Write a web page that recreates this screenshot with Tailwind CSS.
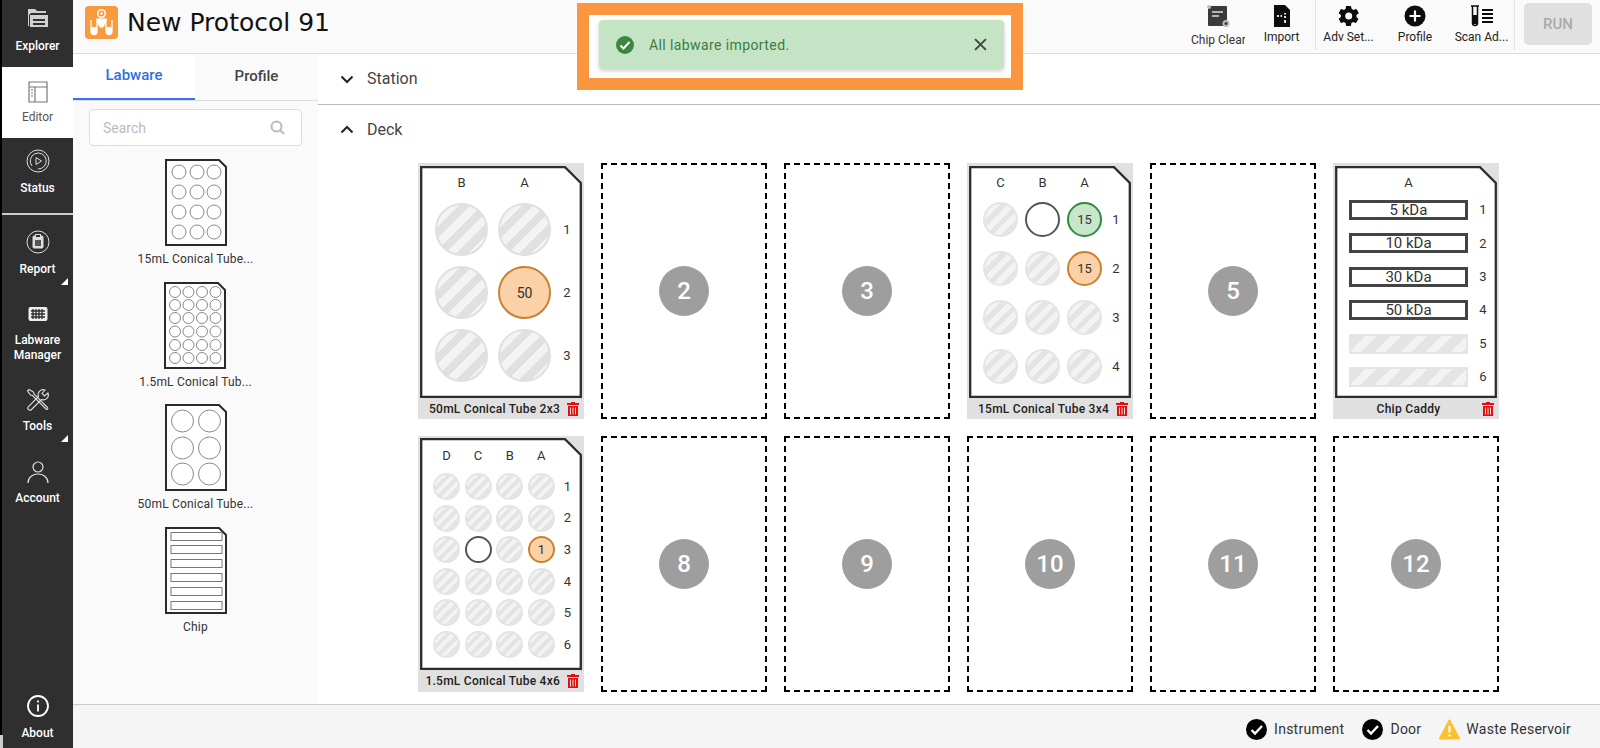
<!DOCTYPE html>
<html lang="en">

<head>
  <meta charset="UTF-8" />
  <title>New Protocol 91</title>
  <script src="https://cdn.jsdelivr.net/npm/@tailwindcss/browser@4"></script>
</head>

<body class="bg-white font-['Roboto',sans-serif] text-[#222] overflow-hidden">
  <!-- shared svg symbols -->
  <svg class="hidden">
    <symbol id="trash" viewBox="0 0 12 14">
      <path fill="#e01010" d="M4 0h4v1h4v2H0V1h4zM1 4h10v10H1zM3 5.500v7h1v-7zM5.500 5.500v7h1v-7zM8 5.500v7h1v-7z" fill-rule="evenodd" />
    </symbol>
    <symbol id="frame" viewBox="0 0 162 232">
      <path d="M1.200 1.200H145L160.800 17V230.800H1.200Z" fill="#fff" stroke="#2c2c2c" stroke-width="2.300" />
    </symbol>
    <symbol id="thumb" viewBox="0 0 62 87">
      <path d="M1 1H54L61 8V86H1Z" fill="#fff" stroke="#2a2a2a" stroke-width="2" />
    </symbol>
    <symbol id="ok" viewBox="0 0 21 21">
      <circle cx="10.500" cy="10.500" r="10.500" fill="#000" />
      <path d="M5.500 11l3.500 3.500 7-7.500" fill="none" stroke="#fff" stroke-width="2.400" />
    </symbol>
  </svg>

  <div class="flex h-[748px] w-[1600px]">
    <!-- Sidebar -->
    <aside class="relative flex w-[73px] shrink-0 flex-col border-l-2 border-black bg-[#2f2f2f] text-xs font-medium text-white">
      <a class="flex h-[67px] flex-col items-center gap-[8px] pt-[6px]">
        <svg class="h-6 w-6" viewBox="0 0 24 24" fill="#d0d0d0">
          <path d="M2 3h7l2 2h9v2H5L3 9v11H2z" />
          <path d="M4 9h18v12H4zM7 13v2h12v-2zM7 17v2h12v-2z" fill-rule="evenodd" />
        </svg>
        <span class="leading-4">Explorer</span>
      </a>
      <a class="flex h-[71px] flex-col items-center gap-[6px] bg-white pt-3 font-normal text-[#555]">
        <svg class="h-6 w-6" viewBox="0 0 24 24" fill="none" stroke="#777" stroke-width="1.200">
          <path d="M3 3h18v20H3zM3 8h18M9 8v15" />
          <path d="M5 11h2M5 14h2M5 17h2" />
        </svg>
        <span class="leading-4">Editor</span>
      </a>
      <a class="flex h-[75px] flex-col items-center gap-[7px] pt-[11px]">
        <svg class="h-6 w-6" viewBox="0 0 24 24" fill="none" stroke="#ddd" stroke-width="1">
          <circle cx="12" cy="12" r="11" />
          <path d="M6 17a8 8 0 1 1 6 3" />
          <path d="M10 8.500l5.500 3.500-5.500 3.500z" />
        </svg>
        <span class="leading-4">Status</span>
      </a>
      <div class="h-[2px] bg-[#ccc]"></div>
      <a class="relative flex h-[75px] flex-col items-center gap-[7px] pt-[15px]">
        <svg class="h-6 w-6" viewBox="0 0 24 24" fill="none" stroke="#ddd" stroke-width="1">
          <circle cx="12" cy="12" r="11" />
          <rect x="7" y="6" width="10" height="12" rx="1" fill="#ddd" />
          <rect x="9.500" y="4.500" width="5" height="3" fill="#2f2f2f" />
          <rect x="9" y="10" width="6" height="6" fill="#555" stroke="none" />
        </svg>
        <span class="leading-4">Report</span>
        <svg class="absolute right-[5px] top-[63px] h-[7px] w-[7px]" viewBox="0 0 7 7"><path d="M7 0v7H0z" fill="#fff" /></svg>
      </a>
      <a class="flex h-[85px] flex-col items-center gap-[7px] pt-3">
        <svg class="h-6 w-6" viewBox="0 0 24 24">
          <rect x="2.500" y="5" width="19" height="14" rx="2" fill="#eee" />
          <path d="M5 9h14M5 12h14M5 15h14M7 7v10M10 7v10M13 7v10M16 7v10" stroke="#2f2f2f" stroke-width="1.300" />
        </svg>
        <span class="text-center leading-[15px]">Labware<br />Manager</span>
      </a>
      <a class="relative flex h-[80px] flex-col items-center gap-[6px] pt-[13px]">
        <svg class="h-6 w-6" viewBox="0 0 24 24" fill="none" stroke="#ddd" stroke-width="1.100">
          <path d="M3 1.500L1.500 3l3 4 2 .5L20 21c1 1 2.500-.5 1.500-1.500L8 6l-.5-2z" />
          <path d="M22 5l-3.500 3-2.500-2.500L19 2a5 5 0 0 0-6.500 6.500L2.500 18.500c-2 2.500 1 5 3 3L15.500 11.500A5 5 0 0 0 22 5z" />
        </svg>
        <span class="leading-4">Tools</span>
        <svg class="absolute right-[5px] top-[60px] h-[7px] w-[7px]" viewBox="0 0 7 7"><path d="M7 0v7H0z" fill="#fff" /></svg>
      </a>
      <a class="flex flex-col items-center gap-[6px] pt-[5px]">
        <svg class="h-6 w-6" viewBox="0 0 24 24" fill="none" stroke="#ddd" stroke-width="1.200">
          <circle cx="12" cy="7" r="5" />
          <path d="M2 23c0-12 20-12 20 0" />
        </svg>
        <span class="leading-4">Account</span>
      </a>
      <a class="mt-auto flex flex-col items-center gap-[7px] pb-[7px]">
        <svg class="h-6 w-6" viewBox="0 0 24 24" fill="none" stroke="#fff" stroke-width="1.800">
          <circle cx="12" cy="12" r="10" />
          <path d="M12 10.500v7M12 6.500v2" />
        </svg>
        <span class="leading-4">About</span>
      </a>
      <div class="absolute bottom-0 left-[-2px] h-[13px] w-[3px] bg-[#ccc]"></div>
    </aside>

    <div class="flex min-w-0 flex-1 flex-col">
      <!-- Top bar -->
      <header class="flex h-[54px] shrink-0 items-start border-b border-[#ddd] bg-[#fafafa]">
        <svg class="ml-3 mt-[6px] h-[33px] w-[33px]" viewBox="0 0 33 33">
          <rect width="33" height="33" rx="4" fill="#f99a3c" />
          <circle cx="16.500" cy="7.500" r="3.800" fill="none" stroke="#fff" stroke-width="1.600" />
          <circle cx="16.500" cy="7.500" r="1.200" fill="#fff" />
          <path d="M11 12.500h11l-3 8-2.500 1.500-2.500-1.500z" fill="#fff" />
          <path d="M6 14v11.500a3 3 0 0 0 6 0V14M21 14v11.500a3 3 0 0 0 6 0V14" fill="none" stroke="#fff" stroke-width="1.300" />
          <path d="M6 21h6v4.500a3 3 0 0 1-6 0zM21 21h6v4.500a3 3 0 0 1-6 0z" fill="#fff" />
        </svg>
        <h1 class="ml-[9px] mt-[6px] font-['DejaVu_Sans',sans-serif] text-[25px] leading-[33px] text-[#111]">New Protocol 91</h1>

        <div class="ml-auto flex h-[50px] text-xs text-[#222]">
          <div class="flex w-[60px] flex-col items-center gap-[5px] pt-[5px]">
            <svg class="h-[22px] w-[24px]" viewBox="0 0 24 22">
              <rect x="2" y="1" width="19" height="20" rx="1" fill="#3a3a3a" />
              <path d="M6 7h11M6 11h7" stroke="#ddd" stroke-width="1.500" />
              <circle cx="3" cy="2" r="2" fill="#bbb" />
              <circle cx="20" cy="18.500" r="3.500" fill="#bbb" />
              <circle cx="20" cy="18.500" r="1.500" fill="#3a3a3a" />
            </svg>
            <span class="w-[54px] overflow-hidden whitespace-nowrap leading-4 text-[#333]">Chip Clear</span>
          </div>
          <div class="flex w-[67px] flex-col items-center gap-[2px] pt-[5px]">
            <svg class="h-[22px] w-[18px]" viewBox="0 0 18 22">
              <path d="M1 0h11l5 5v17H1z" fill="#0c0c0c" />
              <path d="M4 10h2v2H4zM7.500 10h1.500v2H7.500zM11 8h2v1.500h-2zM11 11h2v2h-2zM11 15h2v3h-2z" fill="#ddd" />
            </svg>
            <span class="leading-4">Import</span>
          </div>
          <div class="flex w-[66px] flex-col items-center gap-[1px] border-l border-[#e4e4e4] pt-[4px]">
            <svg class="h-6 w-6" viewBox="0 0 24 24" fill="#0c0c0c">
              <path fill-rule="evenodd" d="M19.400 13c.1-.3.100-.7.100-1s0-.7-.1-1l2.100-1.600c.2-.2.200-.4.100-.6l-2-3.500c-.1-.2-.4-.3-.6-.2l-2.500 1c-.5-.4-1.100-.7-1.700-1L14 2.400c0-.2-.2-.4-.5-.4h-4c-.2 0-.5.200-.5.400l-.4 2.700c-.6.300-1.200.6-1.700 1l-2.500-1c-.2-.1-.5 0-.6.200l-2 3.500c-.1.200-.1.400.1.600L4 11c-.1.300-.1.700-.1 1s0 .7.100 1l-2.100 1.600c-.2.200-.2.400-.1.600l2 3.500c.1.200.4.300.6.200l2.500-1c.5.400 1.100.7 1.700 1l.4 2.700c0 .2.300.4.500.4h4c.3 0 .5-.2.500-.4l.4-2.700c.6-.3 1.200-.6 1.700-1l2.500 1c.2.100.5 0 .6-.2l2-3.500c.1-.2.100-.4-.1-.6zM11.700 15.500a3.500 3.500 0 1 1 0-7 3.500 3.500 0 0 1 0 7z" />
            </svg>
            <span class="leading-4">Adv Set...</span>
          </div>
          <div class="flex w-[68px] flex-col items-center gap-[2px] pt-[5px]">
            <svg class="h-[22px] w-[22px]" viewBox="0 0 22 22">
              <circle cx="11" cy="11" r="10.500" fill="#0c0c0c" />
              <path d="M11 5.500v11M5.500 11h11" stroke="#fff" stroke-width="2.200" />
            </svg>
            <span class="leading-4">Profile</span>
          </div>
          <div class="flex w-[66px] flex-col items-center gap-[2px] border-r border-[#e4e4e4] pt-[5px]">
            <svg class="h-[22px] w-[24px]" viewBox="0 0 24 22">
              <path d="M1 1h8M2.500 1v17a2 2 0 0 0 5 0V1" fill="none" stroke="#0c0c0c" stroke-width="1.500" />
              <path d="M3 10h4v9H3z" fill="#0c0c0c" />
              <path d="M12 5h11M12 9h11M12 13h11M12 17h11" stroke="#0c0c0c" stroke-width="2" />
            </svg>
            <span class="whitespace-nowrap leading-4">Scan Ad...</span>
          </div>
        </div>
        <button class="ml-[9px] mr-2 mt-[3px] h-[42px] w-[68px] rounded-[5px] bg-[#e0e0e0] text-[15px] font-medium text-[#aaa]">RUN</button>
      </header>

      <div class="flex min-h-0 flex-1">
        <!-- Left panel -->
        <section class="w-[245px] shrink-0 bg-[#fafafa]">
          <div class="flex h-[47px] border-b border-[#ddd]">
            <button class="h-[46px] w-[122px] border-b-2 border-[#3b73e6] bg-white pb-[2px] text-[15px] font-medium text-[#2f6fe4]">Labware</button>
            <button class="h-[45px] w-[123px] text-[15px] font-medium text-[#444]">Profile</button>
          </div>
          <div class="mx-4 mt-2 flex h-[37px] items-center justify-between rounded-sm border border-[#ddd] bg-white pl-[13px] pr-4 text-sm text-[#bbb]">
            <span>Search</span>
            <svg class="h-[15px] w-[15px]" viewBox="0 0 15 15" fill="none" stroke="#bbb" stroke-width="2">
              <circle cx="6.500" cy="6.500" r="5" />
              <path d="M10 10l4 4" />
            </svg>
          </div>
          <div class="mt-[13px] flex flex-col items-center text-xs text-[#333]">
            <div class="flex h-[122.500px] flex-col items-center gap-[3px]">
              <svg class="h-[87px] w-[62px]" viewBox="0 0 62 87" fill="none" stroke="#888">
                <use href="#thumb" width="62" height="87" />
                <circle cx="14" cy="13" r="7" /><circle cx="32" cy="13" r="7" /><circle cx="49" cy="13" r="7" />
                <circle cx="14" cy="33" r="7" /><circle cx="32" cy="33" r="7" /><circle cx="49" cy="33" r="7" />
                <circle cx="14" cy="53" r="7" /><circle cx="32" cy="53" r="7" /><circle cx="49" cy="53" r="7" />
                <circle cx="14" cy="73" r="7" /><circle cx="32" cy="73" r="7" /><circle cx="49" cy="73" r="7" />
              </svg>
              <span class="leading-5 tracking-[.2px]">15mL Conical Tube...</span>
            </div>
            <div class="flex h-[122.500px] flex-col items-center gap-[3px]">
              <svg class="h-[87px] w-[62px]" viewBox="0 0 62 87" fill="none" stroke="#888">
                <use href="#thumb" width="62" height="87" />
                <circle cx="11" cy="10" r="5.500" /><circle cx="24.500" cy="10" r="5.500" /><circle cx="38" cy="10" r="5.500" /><circle cx="51.500" cy="10" r="5.500" />
                <circle cx="11" cy="23" r="5.500" /><circle cx="24.500" cy="23" r="5.500" /><circle cx="38" cy="23" r="5.500" /><circle cx="51.500" cy="23" r="5.500" />
                <circle cx="11" cy="36" r="5.500" /><circle cx="24.500" cy="36" r="5.500" /><circle cx="38" cy="36" r="5.500" /><circle cx="51.500" cy="36" r="5.500" />
                <circle cx="11" cy="49.500" r="5.500" /><circle cx="24.500" cy="49.500" r="5.500" /><circle cx="38" cy="49.500" r="5.500" /><circle cx="51.500" cy="49.500" r="5.500" />
                <circle cx="11" cy="63" r="5.500" /><circle cx="24.500" cy="63" r="5.500" /><circle cx="38" cy="63" r="5.500" /><circle cx="51.500" cy="63" r="5.500" />
                <circle cx="11" cy="76" r="5.500" /><circle cx="24.500" cy="76" r="5.500" /><circle cx="38" cy="76" r="5.500" /><circle cx="51.500" cy="76" r="5.500" />
              </svg>
              <span class="leading-5 tracking-[.2px]">1.5mL Conical Tub...</span>
            </div>
            <div class="flex h-[122.500px] flex-col items-center gap-[3px]">
              <svg class="h-[87px] w-[62px]" viewBox="0 0 62 87" fill="none" stroke="#888">
                <use href="#thumb" width="62" height="87" />
                <circle cx="17.500" cy="17" r="11" /><circle cx="44.500" cy="17" r="11" />
                <circle cx="17.500" cy="44" r="11" /><circle cx="44.500" cy="44" r="11" />
                <circle cx="17.500" cy="70" r="11" /><circle cx="44.500" cy="70" r="11" />
              </svg>
              <span class="leading-5 tracking-[.2px]">50mL Conical Tube...</span>
            </div>
            <div class="flex h-[122.500px] flex-col items-center gap-[3px]">
              <svg class="h-[87px] w-[62px]" viewBox="0 0 62 87" fill="none" stroke="#777">
                <use href="#thumb" width="62" height="87" />
                <rect x="6" y="5.500" width="51" height="8" /><rect x="6" y="18.500" width="51" height="8" /><rect x="6" y="32.500" width="51" height="8" />
                <rect x="6" y="46.500" width="51" height="8" /><rect x="6" y="60.500" width="51" height="8" /><rect x="6" y="74.500" width="51" height="8" />
              </svg>
              <span class="leading-5 tracking-[.2px]">Chip</span>
            </div>
          </div>
        </section>

        <!-- Main -->
        <main class="flex min-w-0 flex-1 flex-col bg-white">
          <div class="flex h-[51px] shrink-0 items-center gap-[13px] border-b border-[#bbb] pl-[22px] text-base text-[#444]">
            <svg class="h-[14px] w-[14px]" viewBox="0 0 14 14" fill="none" stroke="#222" stroke-width="2"><path d="M1.500 4.500L7 10l5.500-5.500" /></svg>
            <span>Station</span>
          </div>
          <div class="flex h-[50px] shrink-0 items-center gap-[13px] pl-[22px] text-base text-[#444]">
            <svg class="h-[14px] w-[14px]" viewBox="0 0 14 14" fill="none" stroke="#222" stroke-width="2"><path d="M1.500 9.500L7 4l5.500 5.500" /></svg>
            <span>Deck</span>
          </div>

          <div class="ml-[100px] mt-[8px] grid grid-cols-[repeat(6,166px)] grid-rows-[256px_256px] gap-[17px]">
            <!-- 1 -->
            <div class="flex flex-col bg-[#e0e0e0] px-[2px] pt-[3px]">
              <div class="relative h-[232px] w-[162px]">
                <svg class="absolute inset-0 h-full w-full"><use href="#frame" width="162" height="232" /></svg>
                <div class="relative grid grid-cols-[53px_53px_12px] gap-x-[10px] gap-y-[10px] pl-[15px] pt-[7px] text-[13px] text-[#333]">
                  <span class="h-5 text-center leading-5">B</span><span class="h-5 text-center leading-5">A</span><span></span>
                  <i class="h-[53px] rounded-full border-2 border-[#e0e0e0] bg-[repeating-linear-gradient(135deg,#e0e0e0_0_8px,#f3f3f3_8px_16px)]"></i>
                  <i class="h-[53px] rounded-full border-2 border-[#e0e0e0] bg-[repeating-linear-gradient(135deg,#e0e0e0_0_8px,#f3f3f3_8px_16px)]"></i>
                  <span class="self-center text-center">1</span>
                  <i class="h-[53px] rounded-full border-2 border-[#e0e0e0] bg-[repeating-linear-gradient(135deg,#e0e0e0_0_8px,#f3f3f3_8px_16px)]"></i>
                  <span class="flex h-[53px] items-center justify-center rounded-full border-2 border-[#c98232] bg-[#fbd2a7] text-sm">50</span>
                  <span class="self-center text-center">2</span>
                  <i class="h-[53px] rounded-full border-2 border-[#e0e0e0] bg-[repeating-linear-gradient(135deg,#e0e0e0_0_8px,#f3f3f3_8px_16px)]"></i>
                  <i class="h-[53px] rounded-full border-2 border-[#e0e0e0] bg-[repeating-linear-gradient(135deg,#e0e0e0_0_8px,#f3f3f3_8px_16px)]"></i>
                  <span class="self-center text-center">3</span>
                </div>
              </div>
              <div class="flex h-[21px] items-center justify-end gap-[7px] pr-[3px] text-xs font-medium"><span class="tracking-[.25px]">50mL Conical Tube 2x3</span><svg class="h-[14px] w-3"><use href="#trash" width="12" height="14" /></svg></div>
            </div>
            <!-- 2 -->
            <div class="flex items-center justify-center border-2 border-dashed border-black"><span class="flex h-[50px] w-[50px] items-center justify-center rounded-full bg-[#9e9e9e] text-2xl font-medium text-white">2</span></div>
            <!-- 3 -->
            <div class="flex items-center justify-center border-2 border-dashed border-black"><span class="flex h-[50px] w-[50px] items-center justify-center rounded-full bg-[#9e9e9e] text-2xl font-medium text-white">3</span></div>
            <!-- 4 -->
            <div class="flex flex-col bg-[#e0e0e0] px-[2px] pt-[3px]">
              <div class="relative h-[232px] w-[162px]">
                <svg class="absolute inset-0 h-full w-full"><use href="#frame" width="162" height="232" /></svg>
                <div class="relative grid grid-cols-[35px_35px_35px_12px] gap-x-[7px] gap-y-[14px] pl-[14px] pt-[7px] text-[13px] text-[#333]">
                  <span class="mb-[-5px] h-5 text-center leading-5">C</span><span class="mb-[-5px] h-5 text-center leading-5">B</span><span class="mb-[-5px] h-5 text-center leading-5">A</span><span></span>
                  <i class="h-[35px] rounded-full border-2 border-[#e4e4e4] bg-[repeating-linear-gradient(135deg,#e4e4e4_0_5.500px,#f3f3f3_5.500px_11px)]"></i>
                  <i class="h-[35px] rounded-full border-2 border-[#555] bg-white"></i>
                  <span class="flex h-[35px] items-center justify-center rounded-full border-2 border-[#2e8b3e] bg-[#c8e6c9]">15</span>
                  <span class="ml-[2px] self-center text-center">1</span>
                  <i class="h-[35px] rounded-full border-2 border-[#e4e4e4] bg-[repeating-linear-gradient(135deg,#e4e4e4_0_5.500px,#f3f3f3_5.500px_11px)]"></i>
                  <i class="h-[35px] rounded-full border-2 border-[#e4e4e4] bg-[repeating-linear-gradient(135deg,#e4e4e4_0_5.500px,#f3f3f3_5.500px_11px)]"></i>
                  <span class="flex h-[35px] items-center justify-center rounded-full border-2 border-[#c98232] bg-[#fbd2a7]">15</span>
                  <span class="ml-[2px] self-center text-center">2</span>
                  <i class="h-[35px] rounded-full border-2 border-[#e4e4e4] bg-[repeating-linear-gradient(135deg,#e4e4e4_0_5.500px,#f3f3f3_5.500px_11px)]"></i>
                  <i class="h-[35px] rounded-full border-2 border-[#e4e4e4] bg-[repeating-linear-gradient(135deg,#e4e4e4_0_5.500px,#f3f3f3_5.500px_11px)]"></i>
                  <i class="h-[35px] rounded-full border-2 border-[#e4e4e4] bg-[repeating-linear-gradient(135deg,#e4e4e4_0_5.500px,#f3f3f3_5.500px_11px)]"></i>
                  <span class="ml-[2px] self-center text-center">3</span>
                  <i class="h-[35px] rounded-full border-2 border-[#e4e4e4] bg-[repeating-linear-gradient(135deg,#e4e4e4_0_5.500px,#f3f3f3_5.500px_11px)]"></i>
                  <i class="h-[35px] rounded-full border-2 border-[#e4e4e4] bg-[repeating-linear-gradient(135deg,#e4e4e4_0_5.500px,#f3f3f3_5.500px_11px)]"></i>
                  <i class="h-[35px] rounded-full border-2 border-[#e4e4e4] bg-[repeating-linear-gradient(135deg,#e4e4e4_0_5.500px,#f3f3f3_5.500px_11px)]"></i>
                  <span class="ml-[2px] self-center text-center">4</span>
                </div>
              </div>
              <div class="flex h-[21px] items-center justify-end gap-[7px] pr-[3px] text-xs font-medium"><span class="tracking-[.25px]">15mL Conical Tube 3x4</span><svg class="h-[14px] w-3"><use href="#trash" width="12" height="14" /></svg></div>
            </div>
            <!-- 5 -->
            <div class="flex items-center justify-center border-2 border-dashed border-black"><span class="flex h-[50px] w-[50px] items-center justify-center rounded-full bg-[#9e9e9e] text-2xl font-medium text-white">5</span></div>
            <!-- 6 -->
            <div class="flex flex-col bg-[#e0e0e0] px-[2px] pt-[3px]">
              <div class="relative h-[232px] w-[162px]">
                <svg class="absolute inset-0 h-full w-full"><use href="#frame" width="162" height="232" /></svg>
                <div class="relative grid grid-cols-[119px_12px] gap-x-[9px] gap-y-[13.400px] pl-[14px] pt-[7px] text-[13px] text-[#333]">
                  <span class="col-span-2 mb-[-6.400px] w-[119px] text-center leading-5">A</span>
                  <span class="flex h-5 items-center justify-center border-[3px] border-[#444] text-[15px]">5 kDa</span><span class="self-center text-center">1</span>
                  <span class="flex h-5 items-center justify-center border-[3px] border-[#444] text-[15px]">10 kDa</span><span class="self-center text-center">2</span>
                  <span class="flex h-5 items-center justify-center border-[3px] border-[#444] text-[15px]">30 kDa</span><span class="self-center text-center">3</span>
                  <span class="flex h-5 items-center justify-center border-[3px] border-[#444] text-[15px]">50 kDa</span><span class="self-center text-center">4</span>
                  <i class="h-5 border-2 border-[#e4e4e4] bg-[repeating-linear-gradient(135deg,#e4e4e4_0_10px,#f3f3f3_10px_18px)]"></i><span class="self-center text-center">5</span>
                  <i class="h-5 border-2 border-[#e4e4e4] bg-[repeating-linear-gradient(135deg,#e4e4e4_0_10px,#f3f3f3_10px_18px)]"></i><span class="self-center text-center">6</span>
                </div>
              </div>
              <div class="flex h-[21px] items-center pr-[3px] text-xs font-medium"><span class="flex-1 text-center tracking-[.3px]">Chip Caddy</span><svg class="h-[14px] w-3"><use href="#trash" width="12" height="14" /></svg></div>
            </div>
            <!-- 7 -->
            <div class="flex flex-col bg-[#e0e0e0] px-[2px] pt-[2px]">
              <div class="relative h-[232px] w-[162px]">
                <svg class="absolute inset-0 h-full w-full"><use href="#frame" width="162" height="232" /></svg>
                <div class="relative grid grid-cols-[27px_27px_27px_27px_12px] gap-x-[4.600px] gap-y-[4.600px] pl-[13px] pt-[8px] text-[13px] text-[#333]">
                  <span class="mb-[2.500px] h-5 text-center leading-5">D</span><span class="mb-[2.500px] h-5 text-center leading-5">C</span><span class="mb-[2.500px] h-5 text-center leading-5">B</span><span class="mb-[2.500px] h-5 text-center leading-5">A</span><span></span>
                  <i class="h-[27px] rounded-full border-2 border-[#e4e4e4] bg-[repeating-linear-gradient(135deg,#e4e4e4_0_4px,#f3f3f3_4px_8px)]"></i><i class="h-[27px] rounded-full border-2 border-[#e4e4e4] bg-[repeating-linear-gradient(135deg,#e4e4e4_0_4px,#f3f3f3_4px_8px)]"></i><i class="h-[27px] rounded-full border-2 border-[#e4e4e4] bg-[repeating-linear-gradient(135deg,#e4e4e4_0_4px,#f3f3f3_4px_8px)]"></i><i class="h-[27px] rounded-full border-2 border-[#e4e4e4] bg-[repeating-linear-gradient(135deg,#e4e4e4_0_4px,#f3f3f3_4px_8px)]"></i><span class="ml-[4px] self-center text-center">1</span>
                  <i class="h-[27px] rounded-full border-2 border-[#e4e4e4] bg-[repeating-linear-gradient(135deg,#e4e4e4_0_4px,#f3f3f3_4px_8px)]"></i><i class="h-[27px] rounded-full border-2 border-[#e4e4e4] bg-[repeating-linear-gradient(135deg,#e4e4e4_0_4px,#f3f3f3_4px_8px)]"></i><i class="h-[27px] rounded-full border-2 border-[#e4e4e4] bg-[repeating-linear-gradient(135deg,#e4e4e4_0_4px,#f3f3f3_4px_8px)]"></i><i class="h-[27px] rounded-full border-2 border-[#e4e4e4] bg-[repeating-linear-gradient(135deg,#e4e4e4_0_4px,#f3f3f3_4px_8px)]"></i><span class="ml-[4px] self-center text-center">2</span>
                  <i class="h-[27px] rounded-full border-2 border-[#e4e4e4] bg-[repeating-linear-gradient(135deg,#e4e4e4_0_4px,#f3f3f3_4px_8px)]"></i><i class="h-[27px] rounded-full border-2 border-[#555] bg-white"></i><i class="h-[27px] rounded-full border-2 border-[#e4e4e4] bg-[repeating-linear-gradient(135deg,#e4e4e4_0_4px,#f3f3f3_4px_8px)]"></i><span class="flex h-[27px] items-center justify-center rounded-full border-2 border-[#c98232] bg-[#fbd2a7]">1</span><span class="ml-[4px] self-center text-center">3</span>
                  <i class="h-[27px] rounded-full border-2 border-[#e4e4e4] bg-[repeating-linear-gradient(135deg,#e4e4e4_0_4px,#f3f3f3_4px_8px)]"></i><i class="h-[27px] rounded-full border-2 border-[#e4e4e4] bg-[repeating-linear-gradient(135deg,#e4e4e4_0_4px,#f3f3f3_4px_8px)]"></i><i class="h-[27px] rounded-full border-2 border-[#e4e4e4] bg-[repeating-linear-gradient(135deg,#e4e4e4_0_4px,#f3f3f3_4px_8px)]"></i><i class="h-[27px] rounded-full border-2 border-[#e4e4e4] bg-[repeating-linear-gradient(135deg,#e4e4e4_0_4px,#f3f3f3_4px_8px)]"></i><span class="ml-[4px] self-center text-center">4</span>
                  <i class="h-[27px] rounded-full border-2 border-[#e4e4e4] bg-[repeating-linear-gradient(135deg,#e4e4e4_0_4px,#f3f3f3_4px_8px)]"></i><i class="h-[27px] rounded-full border-2 border-[#e4e4e4] bg-[repeating-linear-gradient(135deg,#e4e4e4_0_4px,#f3f3f3_4px_8px)]"></i><i class="h-[27px] rounded-full border-2 border-[#e4e4e4] bg-[repeating-linear-gradient(135deg,#e4e4e4_0_4px,#f3f3f3_4px_8px)]"></i><i class="h-[27px] rounded-full border-2 border-[#e4e4e4] bg-[repeating-linear-gradient(135deg,#e4e4e4_0_4px,#f3f3f3_4px_8px)]"></i><span class="ml-[4px] self-center text-center">5</span>
                  <i class="h-[27px] rounded-full border-2 border-[#e4e4e4] bg-[repeating-linear-gradient(135deg,#e4e4e4_0_4px,#f3f3f3_4px_8px)]"></i><i class="h-[27px] rounded-full border-2 border-[#e4e4e4] bg-[repeating-linear-gradient(135deg,#e4e4e4_0_4px,#f3f3f3_4px_8px)]"></i><i class="h-[27px] rounded-full border-2 border-[#e4e4e4] bg-[repeating-linear-gradient(135deg,#e4e4e4_0_4px,#f3f3f3_4px_8px)]"></i><i class="h-[27px] rounded-full border-2 border-[#e4e4e4] bg-[repeating-linear-gradient(135deg,#e4e4e4_0_4px,#f3f3f3_4px_8px)]"></i><span class="ml-[4px] self-center text-center">6</span>
                </div>
              </div>
              <div class="flex h-[21px] items-center justify-end gap-[7px] pr-[3px] text-xs font-medium"><span class="tracking-[.25px]">1.5mL Conical Tube 4x6</span><svg class="h-[14px] w-3"><use href="#trash" width="12" height="14" /></svg></div>
            </div>
            <!-- 8 to 12 -->
            <div class="flex items-center justify-center border-2 border-dashed border-black"><span class="flex h-[50px] w-[50px] items-center justify-center rounded-full bg-[#9e9e9e] text-2xl font-medium text-white">8</span></div>
            <div class="flex items-center justify-center border-2 border-dashed border-black"><span class="flex h-[50px] w-[50px] items-center justify-center rounded-full bg-[#9e9e9e] text-2xl font-medium text-white">9</span></div>
            <div class="flex items-center justify-center border-2 border-dashed border-black"><span class="flex h-[50px] w-[50px] items-center justify-center rounded-full bg-[#9e9e9e] text-2xl font-medium text-white">10</span></div>
            <div class="flex items-center justify-center border-2 border-dashed border-black"><span class="flex h-[50px] w-[50px] items-center justify-center rounded-full bg-[#9e9e9e] text-2xl font-medium text-white">11</span></div>
            <div class="flex items-center justify-center border-2 border-dashed border-black"><span class="flex h-[50px] w-[50px] items-center justify-center rounded-full bg-[#9e9e9e] text-2xl font-medium text-white">12</span></div>
          </div>
        </main>
      </div>

      <!-- Status bar -->
      <footer class="flex h-[44px] shrink-0 items-center justify-end border-t border-[#ccc] bg-[#f5f5f5] pr-[29px] pt-[5px] text-sm tracking-[.25px] text-[#333]">
        <svg class="h-[21px] w-[21px]"><use href="#ok" width="21" height="21" /></svg>
        <span class="ml-[7px]">Instrument</span>
        <svg class="ml-[18px] h-[21px] w-[21px]"><use href="#ok" width="21" height="21" /></svg>
        <span class="ml-[7px]">Door</span>
        <svg class="ml-[18px] h-[21px] w-[21px]" viewBox="0 0 21 21">
          <path d="M10.500 1.500L20 19.500H1z" fill="#fbc02d" stroke="#fbc02d" stroke-width="2" stroke-linejoin="round" />
          <path d="M10.500 7v6.500M10.500 15.500v2" stroke="#fff" stroke-width="2.200" />
        </svg>
        <span class="ml-[6px]">Waste Reservoir</span>
      </footer>
    </div>
  </div>

  <!-- Toast with its highlight -->
  <div class="absolute left-[577px] top-[3px] h-[87px] w-[446px] border-[12px] border-[#f9963f] bg-white p-[5px_7px_8px_10px]">
    <div class="flex h-[49px] items-center rounded bg-[#c5e4c6] pl-[17px] pr-[17px] text-sm tracking-[.4px] text-[#3b7d40] shadow-[0_2px_4px_rgba(0,0,0,.2)]">
      <svg class="h-[18px] w-[18px]" viewBox="0 0 18 18">
        <circle cx="9" cy="9" r="9" fill="#3b873e" />
        <path d="M4.500 9.500l3 3 6-6.500" fill="none" stroke="#fff" stroke-width="2" />
      </svg>
      <span class="ml-[15px]">All labware imported.</span>
      <svg class="ml-auto h-[13px] w-[13px]" viewBox="0 0 12 12" stroke="#444" stroke-width="1.800"><path d="M1 1l10 10M11 1L1 11" /></svg>
    </div>
  </div>
</body>

</html>
